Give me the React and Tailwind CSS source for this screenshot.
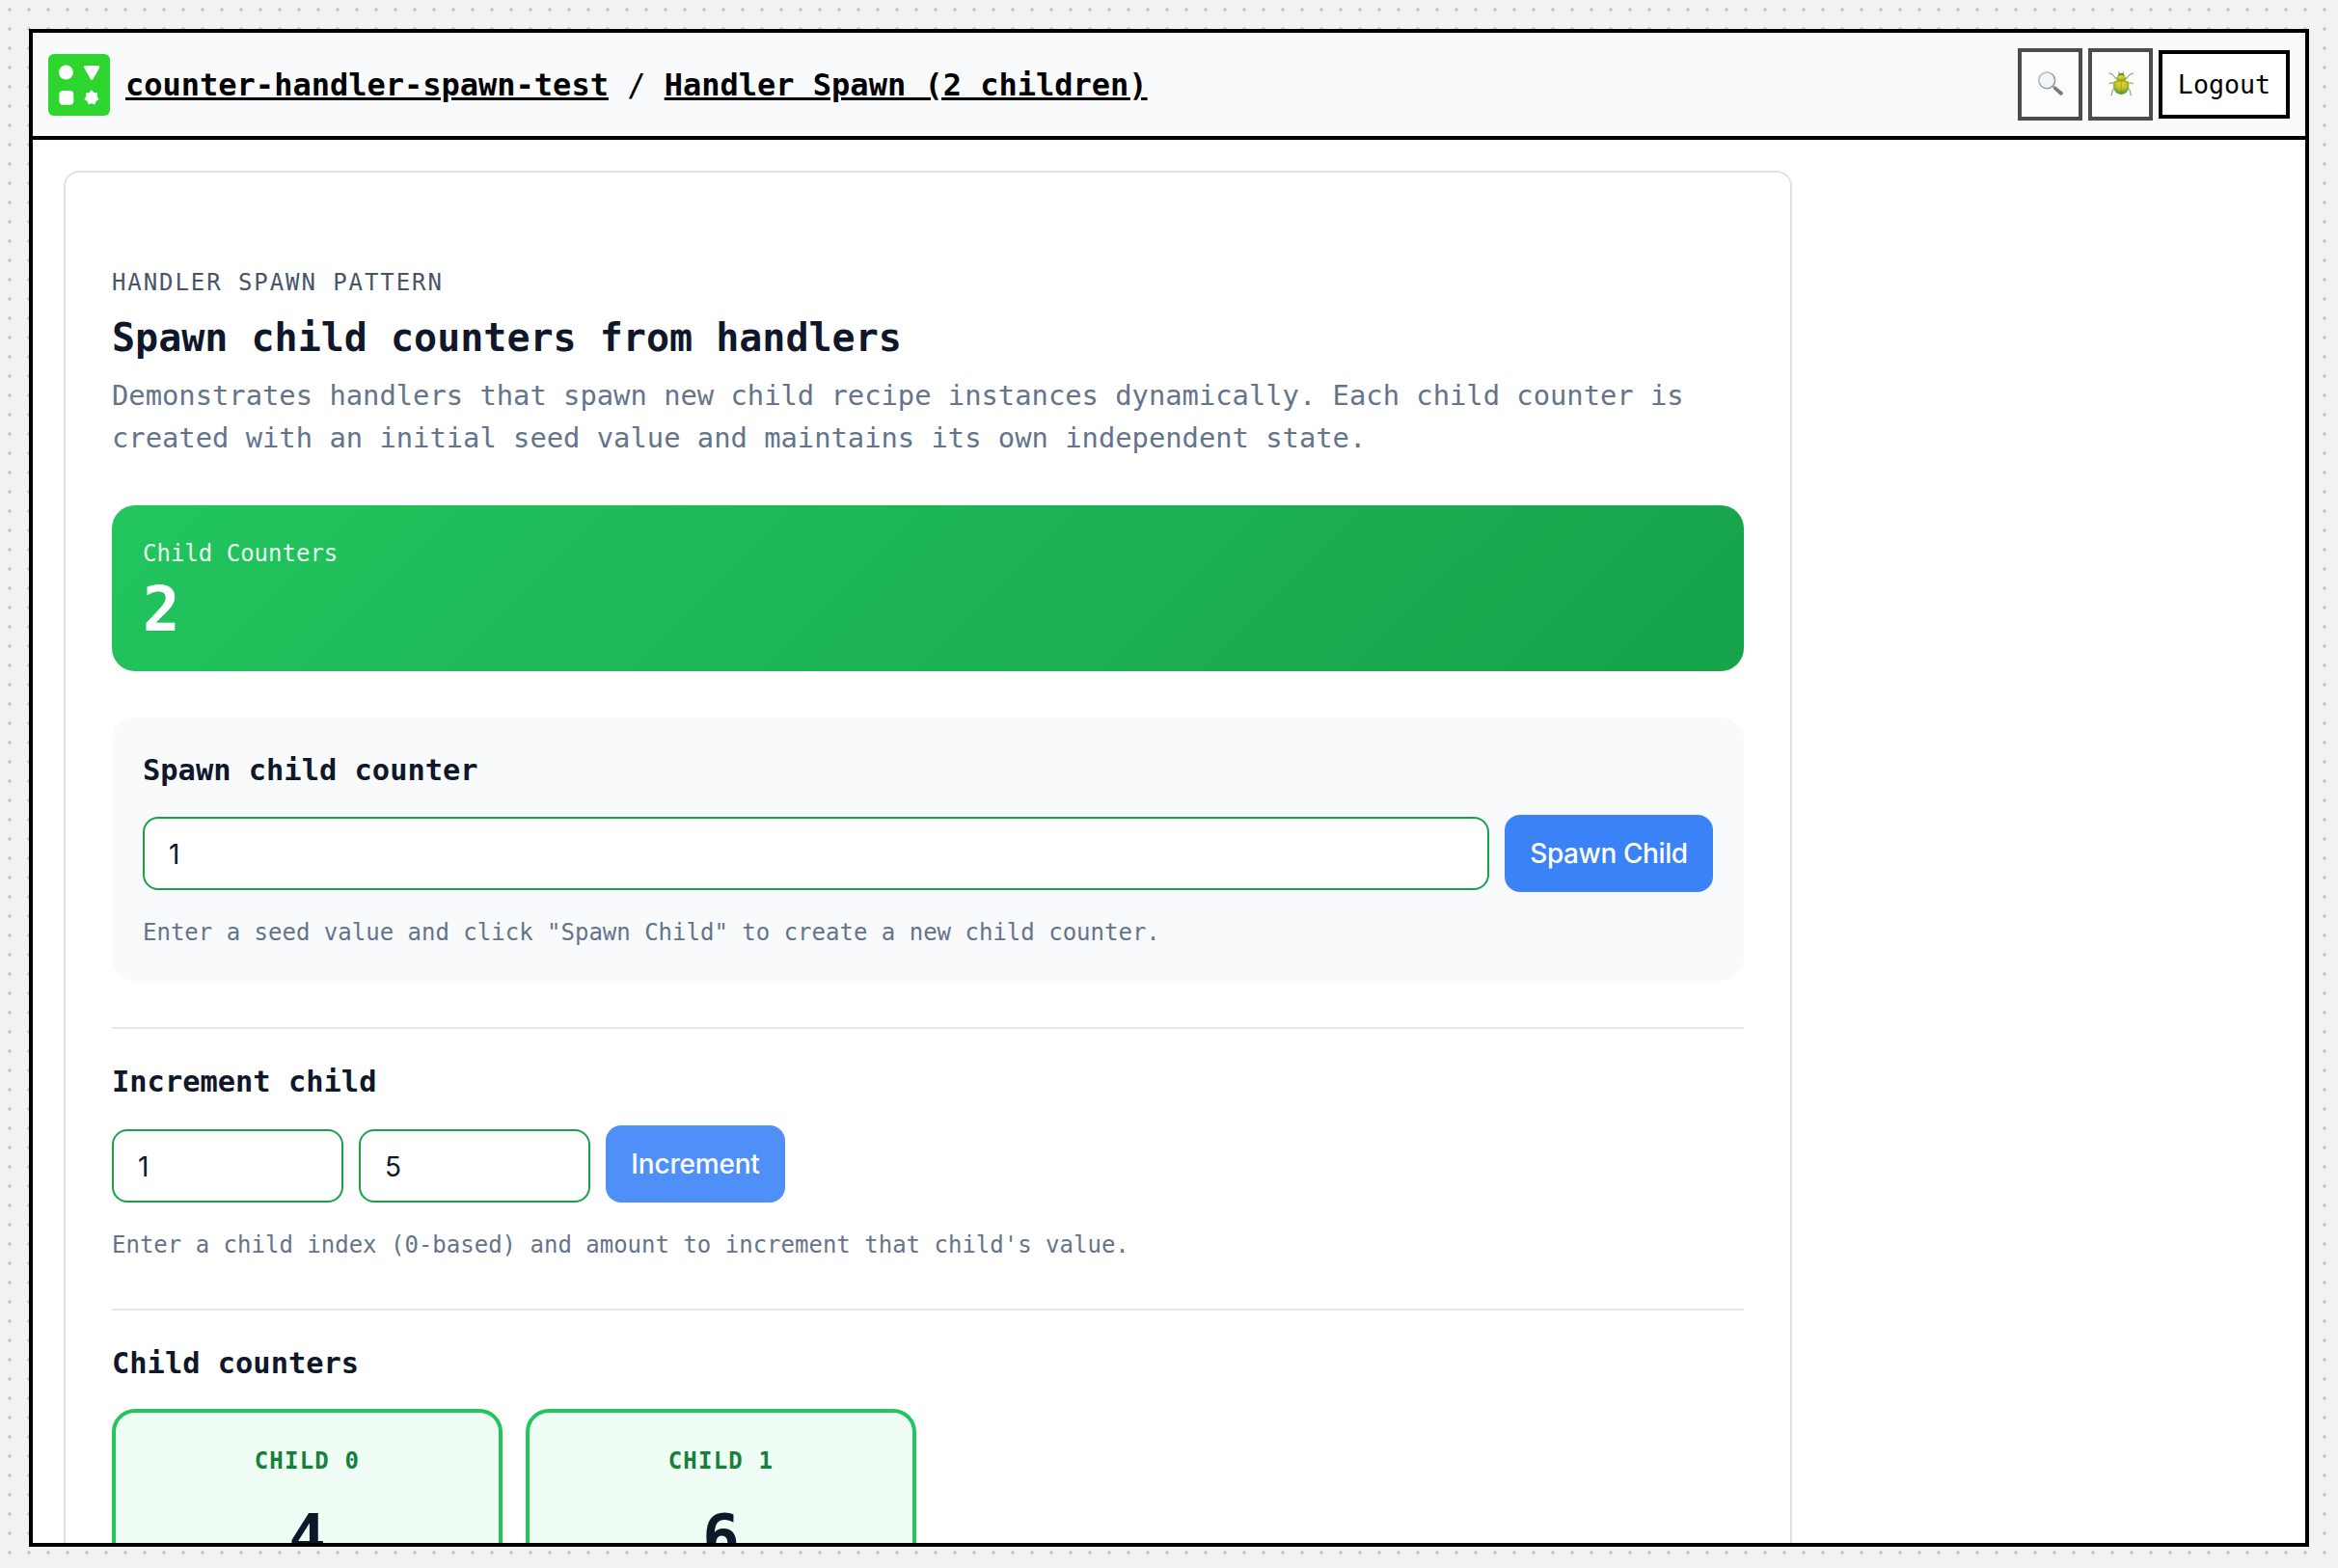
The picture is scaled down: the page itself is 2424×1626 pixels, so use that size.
const BURST = Array.from({ length: 14 }, (_, i) => {
  const angle = (i * Math.PI) / 7 - Math.PI / 2;
  const r = i % 2 === 0 ? 7 : 5;
  return `${(45 + r * Math.cos(angle)).toFixed(2)},${(45.3 + r * Math.sin(angle)).toFixed(2)}`;
}).join(" ");

function Logo() {
  return (
    <svg viewBox="0 0 64 64" className="size-16 shrink-0">
      <rect width="64" height="64" rx="6" fill="#2fd52f" />
      <g fill="#fff" stroke="#fff" strokeLinejoin="round">
        <circle cx="18.400" cy="19" r="7.500" stroke="none" />
        <path d="M38.500 13.500h13.300l-6.600 11.700z" strokeWidth="3" />
        <rect x="11.400" y="38" width="14.900" height="14.800" rx="4" stroke="none" />
        <polygon points={BURST} strokeWidth="1.300" />
      </g>
    </svg>
  );
}

function Magnifier() {
  return (
    <svg viewBox="0 0 28 28" className="size-7 overflow-visible">
      <defs>
        <linearGradient id="rim" x1="0" y1="0" x2="1" y2="1">
          <stop offset="0" stopColor="#b9cbdc" />
          <stop offset="1" stopColor="#85898e" />
        </linearGradient>
        <linearGradient id="grip" x1="0" y1="1" x2="1" y2="0">
          <stop offset="0.300" stopColor="#35383c" />
          <stop offset="0.500" stopColor="#84888d" />
          <stop offset="0.700" stopColor="#4a4d51" />
        </linearGradient>
      </defs>
      <path d="M16 15l3 2.800" stroke="#9a9da1" strokeWidth="2" />
      <path d="M18.800 15.200l7.400 6.400c.9.800.9 1.700.2 2.500-.8.900-1.800.9-2.700.1l-7-6.500z" fill="url(#grip)" />
      <circle cx="10.200" cy="9.300" r="8.400" fill="#f3f4f5" stroke="url(#rim)" strokeWidth="1.500" />
    </svg>
  );
}

function Beetle() {
  return (
    <svg viewBox="0 0 28 28" className="size-7 overflow-visible">
      <defs>
        <radialGradient id="shell" cx="0.500" cy="0.250" r="0.700">
          <stop offset="0" stopColor="#f2d021" />
          <stop offset="0.450" stopColor="#c3c528" />
          <stop offset="1" stopColor="#4f9a38" />
        </radialGradient>
      </defs>
      <g fill="none" stroke="#8fa878" strokeWidth="1.200" strokeLinecap="round">
        <path d="M9 7.500C7 6.500 6.500 2.500 2 1.800M19.400 7.500c2-1 2.500-5 7-5.700" />
        <path d="M7 12.500l-2.500-.8-2.500 1M21.400 12.500l2.500-.8 2.500 1" />
        <path d="M7 17.500c-3 1.500-1.500 4-3 7.500M21.400 17.500c3 1.500 1.500 4 3 7.500M12.500 2.500L11.800.9M15.900 2.500l.7-1.600" />
      </g>
      <ellipse cx="14.200" cy="4.800" rx="3.400" ry="3.100" fill="#5f9137" />
      <ellipse cx="14.200" cy="7.300" rx="5.200" ry="3.300" fill="url(#shell)" />
      <path d="M6.800 10.800c4.500-1.500 10.300-1.500 14.800 0 2 5-.1 13.200-7.400 13.200S4.800 15.800 6.800 10.800z" fill="url(#shell)" />
      <path d="M14.200 10v13.500M6.800 10.800c4.500-1.500 10.300-1.500 14.800 0" fill="none" stroke="#8f8c22" strokeWidth="0.700" />
    </svg>
  );
}

const FIELD =
  "flex h-[76px] items-center rounded-2xl border-2 border-[#16a34a] bg-white pt-px pl-[25px] font-['Inter',sans-serif] text-[28px] text-[#0f172a]";

function Field({ value, size }) {
  return <div className={`${FIELD} ${size}`}>{value}</div>;
}

function Heading({ children }) {
  return <h2 className="text-[30.4px] leading-9 font-bold text-[#0f172a]">{children}</h2>;
}

function ChildCard({ name, value }) {
  return (
    <div className="flex h-[300px] w-[405px] flex-col items-center rounded-3xl border-4 border-[#22c55e] bg-[#f0fdf4] pt-9">
      <span className="text-2xl leading-7 font-bold tracking-[0.05em] text-[#15803d]">{name}</span>
      <span className="mt-7 text-[64px] leading-[74px] font-bold text-[#0f172a]">{value}</span>
    </div>
  );
}

export default function App() {
  return (
    <div className="h-[1626px] w-[2424px] overflow-hidden bg-[#f2f2f2] bg-[radial-gradient(circle,#ccc_2px,transparent_2px)] bg-size-[20px_20px] pt-[30px] pl-[30px] font-['DejaVu_Sans_Mono',monospace] text-black">
      <div className="flex h-[1574px] w-[2364px] flex-col overflow-hidden border-4 border-black bg-white">
        <header className="flex h-[111px] shrink-0 items-center border-b-4 border-black bg-[#f8fafc] px-4">
          <Logo />
          <div className="ml-4 text-[32px] leading-10 whitespace-pre">
            <span className="font-bold underline">counter-handler-spawn-test</span>
            {" / "}
            <span className="font-bold underline">Handler Spawn (2 children)</span>
          </div>
          <div className="ml-auto flex items-center gap-1.5">
            <button className="flex h-[75px] w-[67px] items-center justify-center border-4 border-[#4c4c4c] bg-[#fdfdfe]">
              <Magnifier />
            </button>
            <button className="flex h-[75px] w-[67px] items-center justify-center border-4 border-[#4c4c4c] bg-[#fdfdfe]">
              <Beetle />
            </button>
            <button className="flex h-[71px] w-[136px] items-center justify-center border-4 border-black bg-white text-[26.67px] leading-[31px]">
              Logout
            </button>
          </div>
        </header>

        <main className="min-h-0 grow overflow-hidden pt-8 pl-8">
          <div className="h-[1600px] w-[1792px] rounded-2xl border-2 border-[#e0e0e0] px-12 pt-[100px]">
            <p className="text-2xl leading-7 tracking-[0.08em] text-[#475569]">HANDLER SPAWN PATTERN</p>
            <h1 className="mt-5 text-[40px] leading-[46px] font-bold text-[#0f172a]">
              Spawn child counters from handlers
            </h1>
            <p className="mt-[15px] text-[28.8px] leading-[44px] text-[#64748b]">
              Demonstrates handlers that spawn new child recipe instances dynamically. Each child counter is created
              with an initial seed value and maintains its own independent state.
            </p>

            <section className="mt-12 h-[172px] rounded-3xl bg-linear-[135deg,#22c55e,#16a34a] px-8 pt-9 text-white">
              <p className="text-2xl leading-7 opacity-90">Child Counters</p>
              <p className="mt-[7px] text-[64px] leading-[74px] font-bold">2</p>
            </section>

            <section className="mt-12 h-[273px] rounded-3xl bg-[#f8fafc] px-8 pt-[37px]">
              <Heading>Spawn child counter</Heading>
              <div className="mt-7 flex items-center gap-4">
                <Field value="1" size="grow" />
                <button className="h-20 w-[216px] rounded-2xl bg-[#3b82f6] font-['Inter',sans-serif] text-[28px] font-medium tracking-[-0.4px] text-white">
                  Spawn Child
                </button>
              </div>
              <p className="mt-7 text-2xl leading-7 text-[#64748b]">
                Enter a seed value and click "Spawn Child" to create a new child counter.
              </p>
            </section>

            <section className="mt-12 h-[292px] border-t-2 border-[#e2e8f0] pt-[37px]">
              <Heading>Increment child</Heading>
              <div className="mt-[27px] flex items-end gap-4">
                <Field value="1" size="w-60" />
                <Field value="5" size="w-60" />
                <button className="h-20 w-[186px] rounded-2xl bg-[#4f8ff8] font-['Inter',sans-serif] text-[28px] font-medium tracking-[-0.2px] text-white">
                  Increment
                </button>
              </div>
              <p className="mt-[30px] text-2xl leading-7 text-[#64748b]">
                Enter a child index (0-based) and amount to increment that child's value.
              </p>
            </section>

            <section className="border-t-2 border-[#e2e8f0] pt-[37px]">
              <Heading>Child counters</Heading>
              <div className="mt-[29px] flex gap-6">
                <ChildCard name="CHILD 0" value="4" />
                <ChildCard name="CHILD 1" value="6" />
              </div>
            </section>
          </div>
        </main>
      </div>
    </div>
  );
}
